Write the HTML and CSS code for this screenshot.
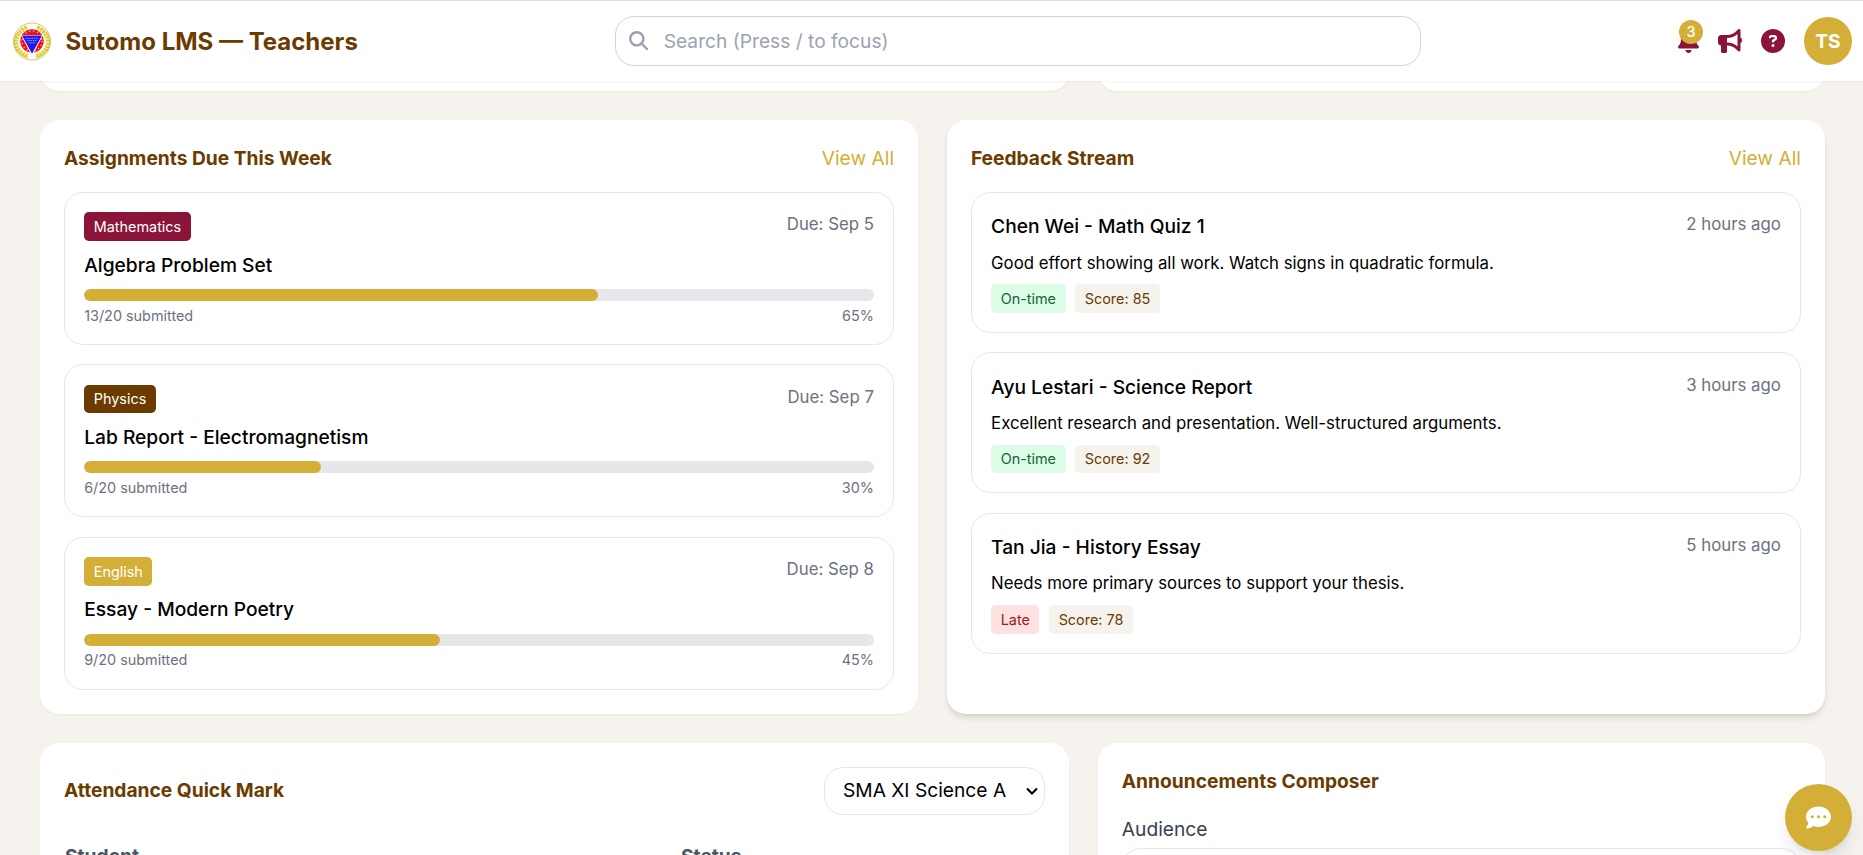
FILE: index.html
```html
<!DOCTYPE html>
<html lang="en">
<head>
<meta charset="utf-8">
<title>Sutomo LMS — Teachers</title>
<link rel="stylesheet" href="styles.css">
</head>
<body>
<header class="topbar">
  <div class="brand">
    <svg class="logo" viewBox="0 0 38 39">
      <circle cx="19" cy="19.500" r="18.500" fill="#fffef4" stroke="#cdbd5c" stroke-width=".9"/>
      <path d="M14 5.500C-1 12-1 29 15 34.500M24 5.500C39 12 39 29 23 34.500" fill="none" stroke="#e6cf3a" stroke-width="4.200" stroke-dasharray="2.600 .7"/>
      <path d="M13 4.500C-3 11-3 30 15 35.500M25 4.500C41 11 41 30 23 35.500" fill="none" stroke="#b5a23c" stroke-width=".8" stroke-dasharray="1.600 1.600"/>
      <circle cx="19" cy="19" r="12.400" fill="#fff"/>
      <circle cx="19" cy="19" r="11.700" fill="#f80d12"/>
      <circle cx="19" cy="19" r="10" fill="none" stroke="#fff" stroke-width="1.200" stroke-dasharray="1 3"/>
      <path d="M8 13h22L19 34.500z" fill="#fff"/>
      <path d="M9 13.600h20L19 31.800z" fill="#2116ee"/>
      <path d="M12.500 16.300h13M14 18.600h10M15.500 20.900h7" stroke="#8d8af8" stroke-width="1" stroke-dasharray="1.500 .5"/>
    </svg>
    <h1>Sutomo LMS — Teachers</h1>
  </div>
  <div class="search">
    <svg class="search-icon" viewBox="0 0 512 512"><path fill="currentColor" d="M416 208c0 45.900-14.900 88.300-40 122.700L502.600 457.400c12.500 12.500 12.500 32.800 0 45.300s-32.800 12.500-45.300 0L330.700 376c-34.400 25.200-76.800 40-122.700 40C93.100 416 0 322.900 0 208S93.100 0 208 0S416 93.100 416 208zM208 352a144 144 0 1 0 0-288 144 144 0 1 0 0 288z"/></svg>
    <input type="text" placeholder="Search (Press / to focus)">
  </div>
  <div class="actions">
    <span class="bell">
      <svg viewBox="0 0 448 512"><path fill="currentColor" d="M224 0c-17.700 0-32 14.300-32 32V51.200C119 66 64 130.600 64 208v18.800c0 47-17.300 92.400-48.500 127.600l-7.400 8.300c-8.400 9.400-10.400 22.900-5.300 34.400S19.400 416 32 416H416c12.600 0 24-7.400 29.200-18.900s3.100-25-5.300-34.400l-7.400-8.300C401.300 319.200 384 273.900 384 226.800V208c0-77.400-55-142-128-156.800V32c0-17.700-14.300-32-32-32zm45.300 493.300c12-12 18.700-28.300 18.700-45.300H224 160c0 17 6.700 33.300 18.700 45.300s28.300 18.700 45.300 18.700s33.300-6.700 45.300-18.700z"/></svg>
      <span class="count">3</span>
    </span>
    <svg class="act" viewBox="0 0 512 512"><path fill="currentColor" d="M480 32c0-12.900-7.800-24.600-19.800-29.600s-25.700-2.200-34.900 6.900L381.700 53c-48 48-113.100 75-181 75H192 160 64c-35.300 0-64 28.700-64 64v96c0 35.300 28.700 64 64 64l0 128c0 17.700 14.300 32 32 32h64c17.700 0 32-14.300 32-32V352l8.700 0c67.900 0 133 27 181 75l43.600 43.600c9.200 9.200 22.900 11.900 34.900 6.900s19.800-16.600 19.800-29.600V300.400c18.600-8.800 32-32.500 32-60.400s-13.400-51.600-32-60.400V32zm-64 76.700V240 371.300C357.200 317.800 280.500 288 200.700 288H192V192h8.700c79.800 0 156.500-29.800 215.300-83.300z"/></svg>
    <svg class="act" viewBox="0 0 512 512"><path fill="currentColor" d="M256 512A256 256 0 1 0 256 0a256 256 0 1 0 0 512zM169.800 165.300c7.900-22.300 29.100-37.300 52.800-37.300h58.300c34.900 0 63.100 28.300 63.100 63.100c0 22.600-12.100 43.500-31.700 54.800L280 264.400c-.2 13-10.900 23.600-24 23.600c-13.300 0-24-10.700-24-24V250.500c0-8.600 4.600-16.500 12.100-20.800l44.300-25.400c4.700-2.700 7.600-7.700 7.600-13.100c0-8.400-6.800-15.100-15.100-15.100H222.600c-3.400 0-6.400 2.100-7.500 5.300l-.4 1.200c-4.400 12.500-18.200 19-30.600 14.600s-19-18.200-14.600-30.600l.4-1.200zM224 352a32 32 0 1 1 64 0 32 32 0 1 1-64 0z"/></svg>
    <span class="avatar">TS</span>
  </div>
</header>

<main class="page">
  <div class="row split"><section class="card stub"></section><section class="card stub"></section></div>

  <div class="row halves">
    <section class="card">
      <div class="card-head"><h2>Assignments Due This Week</h2><a>View All</a></div>
      <div class="list">
        <article class="item">
          <div class="item-head"><span class="tag maroon">Mathematics</span><span class="meta">Due: Sep 5</span></div>
          <h3 class="gap-top">Algebra Problem Set</h3>
          <div class="track"><div class="fill" style="width:65%"></div></div>
          <div class="stats"><span>13/20 submitted</span><span>65%</span></div>
        </article>
        <article class="item">
          <div class="item-head"><span class="tag brown">Physics</span><span class="meta">Due: Sep 7</span></div>
          <h3 class="gap-top">Lab Report - Electromagnetism</h3>
          <div class="track"><div class="fill" style="width:30%"></div></div>
          <div class="stats"><span>6/20 submitted</span><span>30%</span></div>
        </article>
        <article class="item">
          <div class="item-head"><span class="tag gold">English</span><span class="meta">Due: Sep 8</span></div>
          <h3 class="gap-top">Essay - Modern Poetry</h3>
          <div class="track"><div class="fill" style="width:45%"></div></div>
          <div class="stats"><span>9/20 submitted</span><span>45%</span></div>
        </article>
      </div>
    </section>

    <section class="card raised">
      <div class="card-head"><h2>Feedback Stream</h2><a>View All</a></div>
      <div class="list">
        <article class="item">
          <div class="item-head"><h3>Chen Wei - Math Quiz 1</h3><span class="meta">2 hours ago</span></div>
          <p>Good effort showing all work. Watch signs in quadratic formula.</p>
          <div class="tags"><span class="tag ok">On-time</span><span class="tag score">Score: 85</span></div>
        </article>
        <article class="item">
          <div class="item-head"><h3>Ayu Lestari - Science Report</h3><span class="meta">3 hours ago</span></div>
          <p>Excellent research and presentation. Well-structured arguments.</p>
          <div class="tags"><span class="tag ok">On-time</span><span class="tag score">Score: 92</span></div>
        </article>
        <article class="item">
          <div class="item-head"><h3>Tan Jia - History Essay</h3><span class="meta">5 hours ago</span></div>
          <p>Needs more primary sources to support your thesis.</p>
          <div class="tags"><span class="tag late">Late</span><span class="tag score">Score: 78</span></div>
        </article>
      </div>
    </section>
  </div>

  <div class="row split">
    <section class="card">
      <div class="card-head"><h2>Attendance Quick Mark</h2>
        <div class="picker">
          <span>SMA XI Science A</span>
          <svg viewBox="0 0 12 8"><path d="M1 1.500l5 5 5-5" fill="none" stroke="#000" stroke-width="2.100"/></svg>
        </div>
      </div>
      <div class="table-head"><span>Student</span><span>Status</span></div>
    </section>
    <section class="card">
      <div class="card-head"><h2>Announcements Composer</h2></div>
      <label>Audience</label>
      <div class="field"></div>
    </section>
  </div>
</main>

<button class="chat" aria-label="Chat">
  <svg viewBox="0 0 512 512"><path fill="currentColor" fill-rule="evenodd" d="M256 448c141.400 0 256-93.100 256-208S397.400 32 256 32S0 125.100 0 240c0 45.100 17.700 86.800 47.700 120.900c-1.900 24.500-11.400 46.300-21.400 62.900c-5.500 9.200-11.100 16.600-15.200 21.600c-2.100 2.500-3.700 4.400-4.900 5.700c-.6 .6-1 1.100-1.300 1.400l-.3 .3C0 457.400-1.300 464.200 1.200 470.200c2.500 6 8.300 9.800 14.800 9.800c28.700 0 57.600-8.900 81.600-19.300c22.900-10 42.400-21.900 54.300-30.600c31.800 11.500 67 17.900 104.100 17.900zM128 208a32 32 0 1 1 0 64 32 32 0 1 1 0-64zm128 0a32 32 0 1 1 0 64 32 32 0 1 1 0-64zm96 32a32 32 0 1 1 64 0 32 32 0 1 1-64 0z"/></svg>
</button>
</body>
</html>
```
FILE: styles.css
```css
* { box-sizing: border-box; margin: 0; }
html { font-size: 19.2px; }
body {
  height: 855px;
  overflow: hidden;
  background: #f6f3ee;
  color: #000;
  font: 1rem/1.5 Inter, sans-serif;
}
h1, h2, h3 { font-size: 1rem; font-weight: 700; }

.topbar {
  position: relative;
  z-index: 2;
  height: 81px;
  padding: 0 11px 0 13px;
  display: grid;
  grid-template-columns: 602px 806px 1fr;
  align-items: center;
  background: #fff;
  border-top: 1px solid #dedede;
  box-shadow: 0 1px 2px rgba(0, 0, 0, .05);
}
.brand { display: flex; align-items: center; gap: 14.4px; }
.logo { width: 38px; height: 39px; }
.brand h1 { padding-top: 2px; font-size: 24px; line-height: 33.6px; color: #6b3b00; }
.search {
  height: 50px;
  display: flex;
  align-items: center;
  gap: 15.5px;
  padding-left: 13px;
  border: 1px solid #d1d5db;
  border-radius: 1rem;
  color: #9ca3af;
}
.search-icon { width: 19.200px; height: 19.200px; }
.search input { flex: 1; border: 0; outline: 0; padding: 0; background: none; font: inherit; }
.search input::placeholder { color: #9ca3af; opacity: 1; }
.actions { display: flex; align-items: center; justify-content: flex-end; color: #8a1538; }
.bell { position: relative; width: 21px; height: 24px; margin-right: 18.500px; }
.bell svg { display: block; width: 21px; height: 24px; }
.count {
  position: absolute;
  left: 1px;
  top: -9px;
  width: 24px;
  height: 24px;
  border-radius: 50%;
  background: #d4af37;
  color: #fff;
  font-size: 14.400px;
  font-weight: 500;
  line-height: 24px;
  text-align: center;
}
.act { width: 24px; height: 24px; margin-right: 19.200px; }
.avatar {
  width: 48px;
  height: 48px;
  border-radius: 50%;
  background: #d4af37;
  color: #fff;
  font-weight: 700;
  line-height: 48px;
  text-align: center;
}

.page { padding: 0 38px 0 40px; display: flex; flex-direction: column; gap: 28.800px; }
.row { display: grid; gap: 28.800px; }
.halves { grid-template-columns: 1fr 1fr; }
.split { grid-template-columns: 1029px 1fr; }
.card {
  padding: 24px;
  background: #fff;
  border-radius: 1rem;
  box-shadow: 0 1px 2px rgba(0, 0, 0, .05);
}
.stub { height: 48px; margin-top: -37.800px; }
.raised { box-shadow: 0 5px 7px -1px rgba(0, 0, 0, .1), 0 2px 5px -2px rgba(0, 0, 0, .1); }
.card-head { display: flex; justify-content: space-between; align-items: center; margin-bottom: 1rem; }
.card-head h2 { color: #6b3b00; }
.card-head a { color: #d4af37; }
.list { display: flex; flex-direction: column; gap: 1rem; }
.item { padding: 1rem; border: 1px solid #e5e7eb; border-radius: 1rem; }
.item-head { display: flex; justify-content: space-between; align-items: flex-start; }
.item h3 { font-weight: 500; }
.gap-top { margin-top: .5rem; }
.meta { font-size: 16.800px; line-height: 24px; color: #6b7280; }
.tag { padding: .25rem .5rem; border-radius: .25rem; font-size: 14.400px; line-height: 19.200px; }
.maroon { background: #8a1538; color: #fff; }
.brown { background: #6b3b00; color: #fff; }
.gold { background: #d4af37; color: #fff; }
.ok { background: #dcfce7; color: #166534; }
.late { background: #fee2e2; color: #991b1b; }
.score { background: #f6f3ee; color: #6b3b00; }
.track { height: 12px; margin-top: .5rem; border-radius: 6px; background: #e5e7eb; overflow: hidden; }
.fill { height: 100%; border-radius: 6px; background: #d4af37; }
.stats { display: flex; justify-content: space-between; margin-top: .25rem; font-size: 14.400px; line-height: 19.200px; color: #6b7280; }
.item p { margin-top: .5rem; font-size: 16.800px; line-height: 24px; }
.tags { display: flex; gap: .5rem; margin-top: .5rem; }

.picker {
  display: flex;
  align-items: center;
  justify-content: space-between;
  width: 221px;
  height: 48px;
  padding: 0 6px 0 18px;
  border: 1px solid #e5e7eb;
  border-radius: 1rem;
}
.picker svg { width: 12px; height: 8px; }
.table-head { display: grid; grid-template-columns: 616px 1fr; padding: 8px 1px; font-weight: 700; color: #4b5563; }
.card label { display: block; color: #374151; }
.field { height: 48px; margin-top: .25rem; border: 1px solid #e5e7eb; border-radius: 1rem; }

.chat {
  position: fixed;
  z-index: 3;
  right: 11px;
  bottom: 4px;
  width: 67px;
  height: 67px;
  padding: 0;
  border: 0;
  border-radius: 50%;
  background: #d4af37;
  color: #fff;
  display: grid;
  place-items: center;
  box-shadow: 0 12px 18px -3px rgba(0, 0, 0, .1), 0 5px 7px -4px rgba(0, 0, 0, .1);
}
.chat svg { width: 25px; height: 25px; }
```
